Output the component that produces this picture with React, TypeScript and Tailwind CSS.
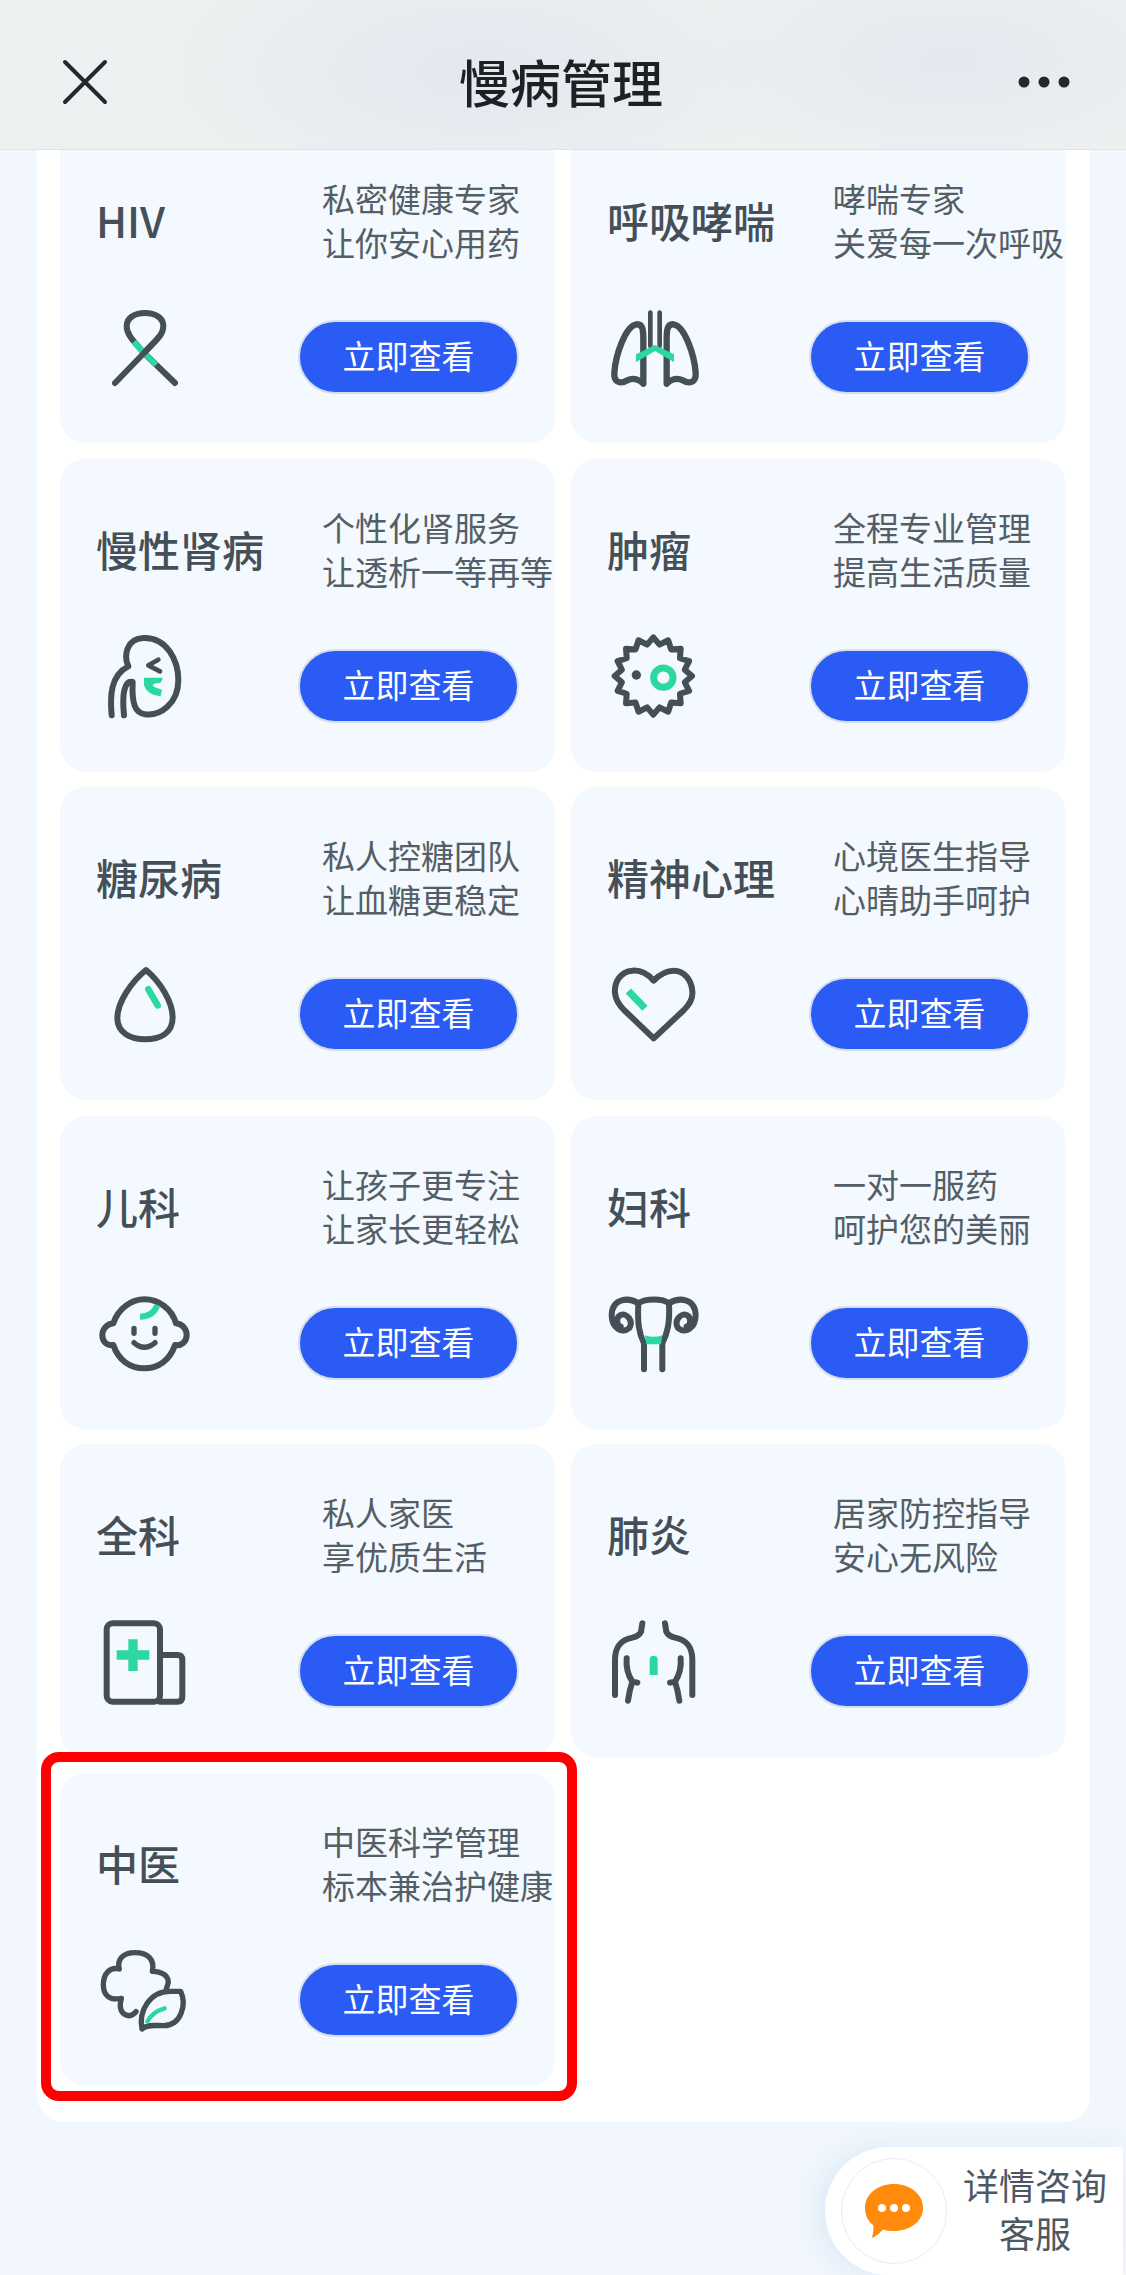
import type { ReactNode } from 'react';

const font = { fontFamily: '"Noto Sans CJK SC", "Noto Sans", sans-serif' };
const GRAY = '#454f57';
const GREEN = '#2bd8a0';

// spiky outline of the tumour icon
function spikes() {
  const pts: string[] = [];
  for (let i = 0; i < 32; i++) {
    const a = (i * Math.PI) / 16 - Math.PI / 2;
    const r = i % 2 === 0 ? 116 : 96;
    pts.push(`${(223 + r * Math.cos(a)).toFixed(1)},${(227 + r * Math.sin(a)).toFixed(1)}`);
  }
  return pts.join(' ');
}

function Icon({ vb, children }: { vb: string; children: ReactNode }) {
  return (
    <svg
      viewBox={vb}
      className="w-[100px] h-[100px] shrink-0"
      fill="none"
      stroke={GRAY}
      strokeWidth={18}
      strokeLinecap="round"
      strokeLinejoin="round"
    >
      {children}
    </svg>
  );
}

const items = [
  {
    title: 'HIV',
    lines: ['私密健康专家', '让你安心用药'],
    vb: '90 87 300 300',
    icon: (
      <>
        <path d="M252 246C225 214 200 194 200 165C200 140 225 126 255 126C285 126 310 140 310 165C310 194 285 210 252 246L345 336" />
        <path d="M222 212L252 246L288 282" stroke={GREEN} strokeLinecap="butt" />
        <path d="M165 336L252 246C268 228 285 212 296 198" />
      </>
    ),
  },
  {
    title: '呼吸哮喘',
    lines: ['哮喘专家', '关爱每一次呼吸'],
    vb: '66 87 300 300',
    icon: (
      <>
        <path d="M172 160C140 165 110 250 106 305C104 335 125 340 145 328C165 318 185 328 193 338L193 205C193 178 192 158 172 160Z" strokeWidth={19} />
        <path d="M284 160C316 165 346 250 350 305C352 335 331 340 311 328C291 318 271 328 263 338L263 205C263 178 264 158 284 160Z" strokeWidth={19} />
        <path d="M214 125L214 225M242 125L242 225" strokeWidth={14} />
        <path d="M228 222L285 250L285 273L262 260L228 240L194 260L171 273L171 250Z" fill={GREEN} stroke="none" />
      </>
    ),
  },
  {
    title: '慢性肾病',
    lines: ['个性化肾服务', '让透析一等再等'],
    vb: '90 86 300 300',
    icon: (
      <>
        <path d="M155 345C150 290 150 225 205 198C190 165 200 115 250 113C320 110 355 180 355 240C355 310 300 348 255 342C225 338 215 310 218 245C195 240 185 275 192 345" />
        <path d="M295 178L265 195L300 213" strokeWidth={14} />
        <path d="M252 232L308 232Q306 245 298 248Q282 248 278 255Q282 262 306 268L302 288Q262 285 252 255Z" fill={GREEN} stroke="none" />
      </>
    ),
  },
  {
    title: '肿瘤',
    lines: ['全程专业管理', '提高生活质量'],
    vb: '66 86 300 300',
    icon: (
      <>
        <polygon points={spikes()} />
        <circle cx={172} cy={224} r={14} fill={GRAY} stroke="none" />
        <circle cx={253} cy={232} r={29} stroke={GREEN} strokeWidth={21} />
      </>
    ),
  },
  {
    title: '糖尿病',
    lines: ['私人控糖团队', '让血糖更稳定'],
    vb: '90 81 300 300',
    icon: (
      <>
        <path d="M258 120C215 155 172 215 172 265C172 310 215 328 255 328C300 328 338 310 338 262C338 215 300 155 258 120Z" />
        <path d="M265 178L293 226" stroke={GREEN} strokeWidth={20} />
      </>
    ),
  },
  {
    title: '精神心理',
    lines: ['心境医生指导', '心晴助手呵护'],
    vb: '66 81 300 300',
    icon: (
      <>
        <path d="M224 152C205 130 185 120 160 122C125 125 105 155 108 190C110 210 120 225 135 240L224 325L315 240C330 225 342 205 340 185C338 150 315 122 285 122C262 122 240 135 224 152Z" />
        <path d="M148 183L198 235" stroke={GREEN} strokeWidth={22} strokeLinecap="butt" />
      </>
    ),
  },
  {
    title: '儿科',
    lines: ['让孩子更专注', '让家长更轻松'],
    vb: '90 78 300 300',
    icon: (
      <>
        <path d="M160 190C175 145 215 118 253 118C295 118 335 145 348 190C368 192 380 208 380 225C380 245 365 258 345 255C330 300 295 325 253 325C210 325 175 300 160 255C140 258 127 245 127 225C127 208 140 192 160 190Z" />
        <path d="M222 205L222 220M285 205L285 220" strokeWidth={16} />
        <path d="M222 248Q253 275 285 248" strokeWidth={16} />
        <path d="M240 170C270 170 285 155 292 135" stroke={GREEN} strokeLinecap="butt" />
      </>
    ),
  },
  {
    title: '妇科',
    lines: ['一对一服药', '呵护您的美丽'],
    vb: '66 78 300 300',
    icon: (
      <>
        <path d="M195 328L195 250C180 220 175 190 178 130C200 115 250 115 270 130C273 190 265 220 250 250L250 328" />
        <path d="M178 130C150 112 100 112 98 165C98 205 130 222 150 205C165 185 145 158 125 165C110 172 112 195 125 200" />
        <path d="M270 130C298 112 348 112 350 165C350 205 318 222 298 205C283 185 303 158 323 165C338 172 336 195 323 200" />
        <path d="M198 226Q224 235 250 226L246 253L202 253Z" fill={GREEN} stroke="none" />
      </>
    ),
  },
  {
    title: '全科',
    lines: ['私人家医', '享优质生活'],
    vb: '90 72 300 300',
    icon: (
      <>
        <rect x={140} y={100} width={160} height={235} rx={18} />
        <path d="M300 195L352 195Q367 195 367 210L367 320Q367 335 352 335L300 335" />
        <path d="M170 195L268 195M219 148L219 243" stroke={GREEN} strokeWidth={28} strokeLinecap="butt" />
      </>
    ),
  },
  {
    title: '肺炎',
    lines: ['居家防控指导', '安心无风险'],
    vb: '66 72 300 300',
    icon: (
      <>
        <path d="M190 100L186 125Q180 138 160 143C125 150 108 170 108 210L108 315" />
        <path d="M143 205C140 240 150 260 160 275L175 278M160 275C155 290 150 310 147 332" />
        <path d="M258 100L262 125Q268 138 288 143C323 150 340 170 340 210L340 315" />
        <path d="M305 205C308 240 298 260 288 275L273 278M288 275C293 290 298 310 301 332" />
        <path d="M212 255L212 209Q212 197 224 197Q236 197 236 209L236 255Z" fill={GREEN} stroke="none" />
      </>
    ),
  },
  {
    title: '中医',
    lines: ['中医科学管理', '标本兼治护健康'],
    vb: '90 87 300 300',
    icon: (
      <>
        <path d="M228 293Q215 310 198 303C180 296 178 275 184 253C150 260 130 245 130 213C130 178 150 158 178 165C170 135 190 116 225 116C262 116 285 135 277 172C305 172 325 185 325 205L319 225" strokeWidth={16} />
        <path d="M246 345C235 290 270 232 330 232L362 232C380 270 365 335 310 335C285 335 262 330 246 345Z" strokeWidth={16} />
        <path d="M262 323C272 302 290 290 314 283" stroke={GREEN} strokeWidth={13} />
      </>
    ),
  },
];

function Card({ title, lines, vb, icon }: (typeof items)[number]) {
  return (
    <div className="h-[313px] rounded-[26px] bg-[#f3f9fe] pt-[46px]">
      <div className="flex h-[88px] items-center">
        <div className="w-[262px] shrink-0 pl-[36px] text-[42px] font-medium leading-none text-[#454f57]">{title}</div>
        <div className="whitespace-nowrap text-[33px] leading-[44px] text-[#545e66]">
          {lines.map((l) => (
            <div key={l}>{l}</div>
          ))}
        </div>
      </div>
      <div className="mt-[36px] flex pl-[30px]">
        <Icon vb={vb}>{icon}</Icon>
        <button className="ml-[108px] mt-[20px] flex h-[74px] w-[221px] items-center justify-center rounded-full border-2 border-[#d5deeb] bg-[#2a5bf5] pb-[3px] text-[33px] leading-none text-white">
          立即查看
        </button>
      </div>
    </div>
  );
}

export default function App() {
  return (
    <div className="relative h-[2275px] w-[1126px] overflow-hidden bg-[#f1f7fc]" style={font}>
      {/* Header */}
      <header className="relative z-10 flex h-[150px] items-center justify-between border-b border-[#e1e4e6] bg-[#edf0f0] bg-[radial-gradient(ellipse_300px_130px_at_480px_70px,#e3e8f0,transparent),radial-gradient(ellipse_260px_110px_at_950px_60px,#e4e9f0,transparent)] pl-[62px] pr-[56px] pt-[14px]">
        <svg viewBox="0 0 46 46" className="h-[46px] w-[46px]" stroke="#23282c" strokeWidth={4} strokeLinecap="round">
          <path d="M3 3L43 43M43 3L3 43" />
        </svg>
        <h1 className="mr-[4px] text-[51px] font-medium leading-none text-[#1d2124]">慢病管理</h1>
        <svg viewBox="0 0 52 12" className="h-[12px] w-[52px]" fill="#23282c">
          <circle cx={6} cy={6} r={5.5} />
          <circle cx={26} cy={6} r={5.5} />
          <circle cx={46} cy={6} r={5.5} />
        </svg>
      </header>

      {/* List */}
      <main className="-mt-[20px] px-[37px]">
        <div className="w-[1053px] rounded-b-[26px] bg-white px-[23px] pb-[36px]">
          <div className="grid grid-cols-[495px_495px] gap-x-[16px] gap-y-[15.6px]">
            {items.map((item) => (
              <Card key={item.title} {...item} />
            ))}
          </div>
        </div>
      </main>

      {/* Red annotation */}
      <div className="absolute left-[41px] top-[1752px] h-[349px] w-[536px] rounded-[18px] border-[10px] border-[#ff0000]" />

      {/* Floating service button */}
      <div className="absolute left-[825px] top-[2147px] flex h-[128px] w-[298px] items-center rounded-l-[70px] bg-white pl-[16px] shadow-[-8px_0_24px_rgba(190,210,240,0.35)]">
        <div className="flex h-[106px] w-[106px] shrink-0 items-center justify-center rounded-full border border-[#e8edf3]">
          <svg viewBox="0 0 60 56" className="h-[56px] w-[60px]">
            <path d="M30 1C46 1 59 11 59 25C59 39 45 48 30 48C26 48 22 47.500 19 46.500C16 50 11 54 8 55C9 51 10 45 9 42C4 38 1 32 1 25C1 11 14 1 30 1Z" fill="#ff8a0c" />
            <circle cx={18} cy={25} r={4} fill="#fff" />
            <circle cx={30} cy={25} r={4} fill="#fff" />
            <circle cx={42} cy={25} r={4} fill="#fff" />
          </svg>
        </div>
        <div className="ml-[16px] -mt-[6px] whitespace-nowrap text-center text-[36px] leading-[48px] text-[#4d5962]">
          <div>详情咨询</div>
          <div>客服</div>
        </div>
      </div>
    </div>
  );
}
